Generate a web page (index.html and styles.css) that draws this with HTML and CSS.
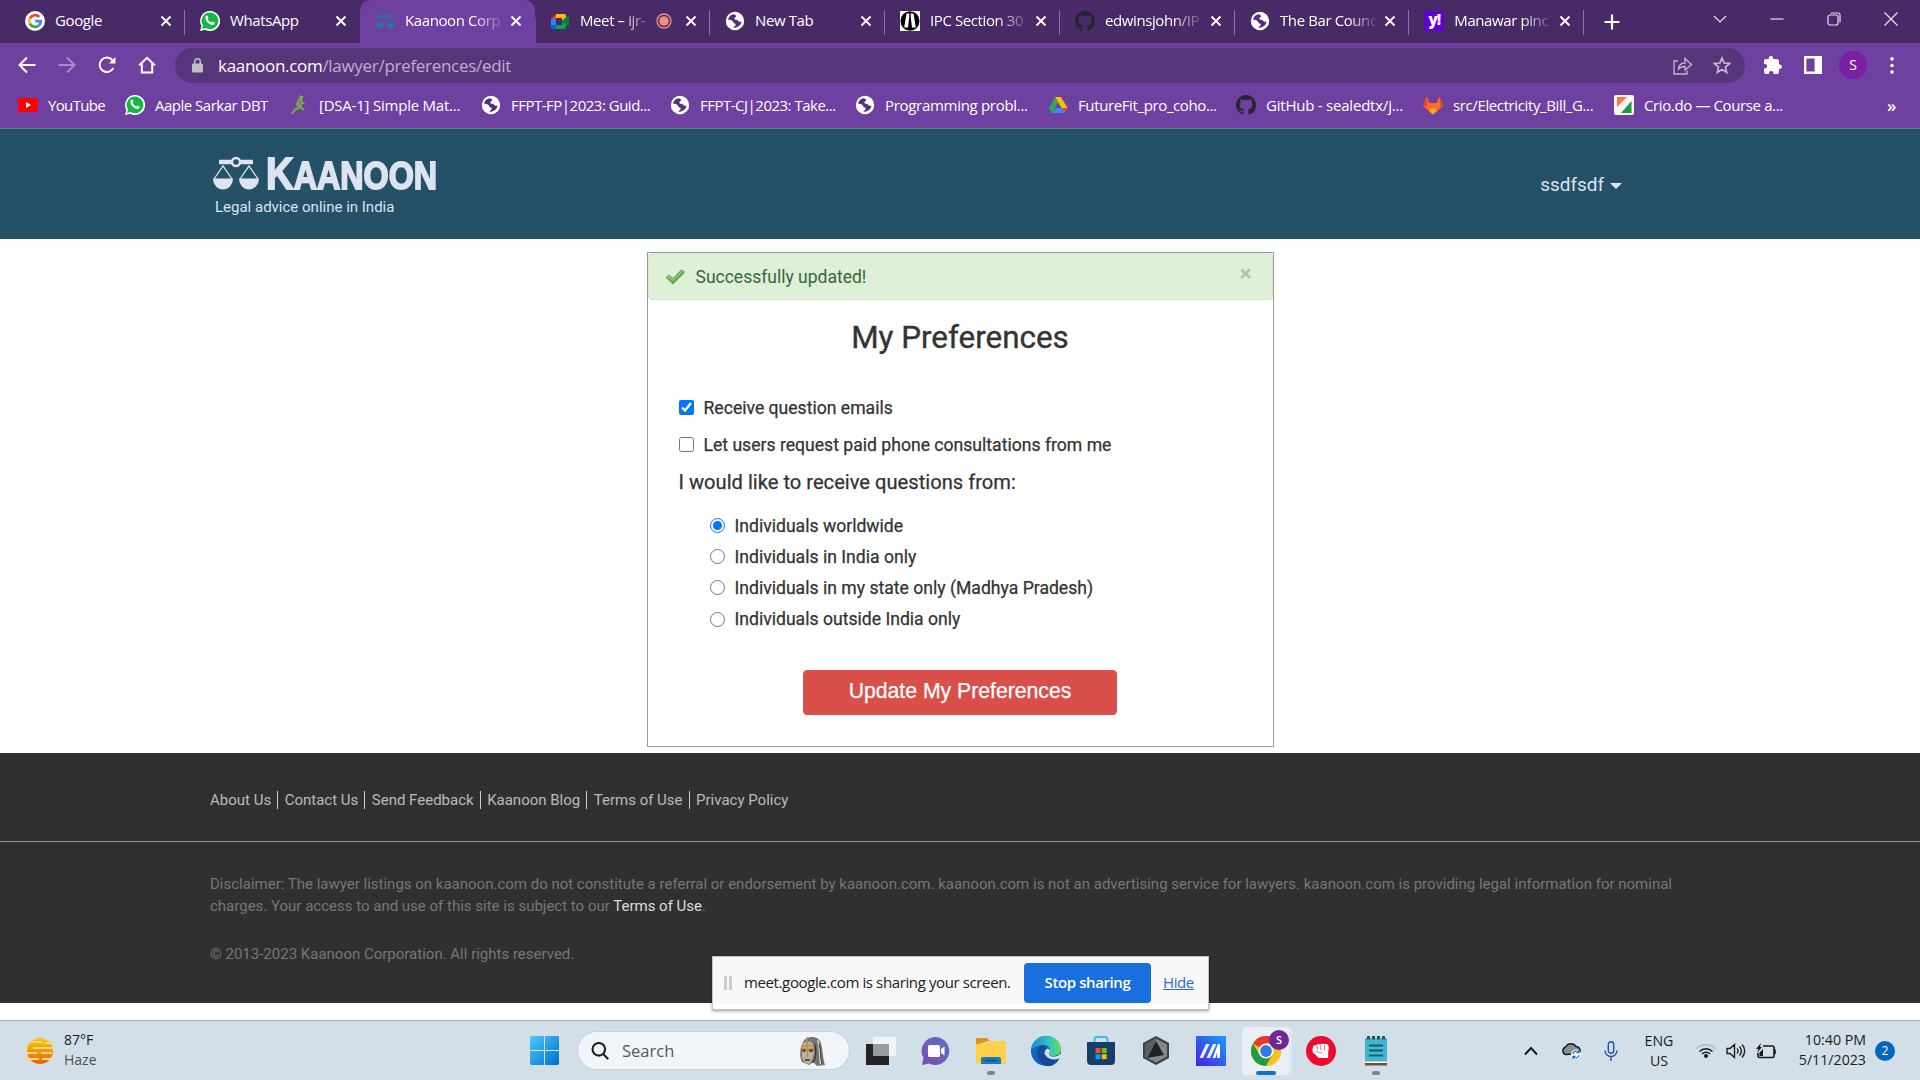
FILE: index.html
```html
<!DOCTYPE html>
<html lang="en">
<head>
<meta charset="utf-8">
<title>Kaanoon Corporation</title>
<link rel="stylesheet" href="styles.css">
</head>
<body>
<svg class="defs" aria-hidden="true">
  <symbol id="globe" viewBox="0 0 20 20"><circle cx="10" cy="10" r="9.2" fill="#fff"/><path d="M9 3.2c-3 .3-5.6 2.6-5.9 5.6 2 .1 3.600.4 4.600 1.400.9.9.4 2.200 2 2.300 1.300.1 1.200 1.500.4 2.400-.6.6-1.500.5-1.600 1.900 4 .2 7.400-2.400 8-6-1.600.2-3-.1-3.700-1.300-.6-1-2.400-.5-3.200-1.300-.8-1 .4-1.900 1.400-2.500C11.600 5.200 10.800 4 9 3.200z" fill="#53317a"/></symbol>
  <symbol id="whatsapp" viewBox="0 0 20 20"><path d="M10 0a10 10 0 0 0-8.600 15L0 20l5.200-1.300A10 10 0 1 0 10 0z" fill="#fff"/><path d="M10 1.500a8.400 8.400 0 0 0-7 13l-1 3.500 3.600-.9A8.400 8.400 0 1 0 10 1.500z" fill="#12b83f"/><path d="M6.300 4.800c.5-.5 1.200-.4 1.400.2l.7 1.600c.2.600-.7 1.200-.7 1.500.6 1.500 1.900 2.700 3.500 3.400.4.100.9-1.100 1.400-.9l1.900.9c.5.300.2 1.300-.2 1.800-1.600 1.600-4.200.6-6.200-1.200C5.800 10 4.500 7 6.300 4.800z" fill="#fff"/></symbol>
  <symbol id="github" viewBox="0 0 16 16"><path d="M8 0C3.580 0 0 3.580 0 8c0 3.540 2.290 6.530 5.470 7.590.4.070.55-.17.55-.38 0-.19-.01-.82-.01-1.490-2.010.37-2.530-.49-2.690-.94-.09-.23-.48-.94-.82-1.130-.28-.15-.68-.52-.01-.53.63-.01 1.080.58 1.230.82.72 1.210 1.870.87 2.330.66.07-.52.28-.87.51-1.070-1.780-.2-3.640-.89-3.640-3.950 0-.87.31-1.590.82-2.150-.08-.2-.36-1.020.08-2.120 0 0 .67-.21 2.200.82.64-.18 1.320-.27 2-.27s1.360.09 2 .27c1.530-1.040 2.200-.82 2.200-.82.44 1.100.16 1.920.08 2.120.51.56.82 1.270.82 2.150 0 3.070-1.870 3.750-3.650 3.950.29.25.54.73.54 1.480 0 1.070-.01 1.930-.01 2.200 0 .21.150.46.55.38A8.010 8.010 0 0 0 16 8c0-4.420-3.580-8-8-8z" fill="#23272e"/></symbol>
  <symbol id="close" viewBox="0 0 12 12"><path d="M1.500 1.500l9 9m0-9l-9 9" stroke="#fff" stroke-width="1.900"/></symbol>
  <symbol id="scales" viewBox="0 0 46 34"><g fill="none" stroke="currentColor"><path d="M6 6h13M27 6h13" stroke-width="4.600"/><circle cx="23" cy="6" r="4" stroke-width="2.400"/><path d="M1 23L10 10l9 13M27 23l9-13 9 13" stroke-width="1.300"/></g><path d="M0 22.500h20a10 11 0 0 1-20 0zM26 22.500h20a10 11 0 0 1-20 0z" fill="currentColor"/></symbol>
</svg>

<div class="tabs">
  <div class="tab">
    <svg class="fav" viewBox="0 0 20 20"><circle cx="10" cy="10" r="10" fill="#fff"/><g fill="none" stroke-width="2.700"><path d="M14.200 6A5.800 5.800 0 0 0 4.900 7.300" stroke="#ea4335"/><path d="M4.900 7.300a5.800 5.800 0 0 0 0 5.400" stroke="#fbbc05"/><path d="M4.900 12.700a5.800 5.800 0 0 0 9 1.700" stroke="#34a853"/><path d="M13.900 14.400a5.800 5.800 0 0 0 1.900-4.300H10.200" stroke="#4285f4"/></g></svg>
    <span class="name">Google</span><svg class="x"><use href="#close"/></svg>
  </div>
  <div class="tab">
    <svg class="fav"><use href="#whatsapp"/></svg>
    <span class="name">WhatsApp</span><svg class="x"><use href="#close"/></svg>
  </div>
  <div class="tab active">
    <svg class="fav teal"><use href="#scales"/></svg>
    <span class="name long">Kaanoon Corp</span><svg class="x"><use href="#close"/></svg>
  </div>
  <div class="tab">
    <svg class="fav" viewBox="0 0 20 20"><path d="M6 3h8.500a1.500 1.500 0 0 1 1.500 1.500V8l-4 2V7H6z" fill="#fbbc04"/><path d="M1 8l5-5v5z" fill="#ea4335"/><path d="M1 8h5v6H1z" fill="#2684fc"/><path d="M1 14h5v4H2.500A1.500 1.500 0 0 1 1 16.500z" fill="#0066da"/><path d="M6 14h6v-3l4 2v3.500a1.500 1.500 0 0 1-1.500 1.500H6z" fill="#00ac47"/><path d="M12 10l6-5.500c.4-.3 1-.1 1 .5v10c0 .600-.6.800-1 .5z" fill="#00832d"/></svg>
    <span class="name short">Meet – ijr-</span>
    <svg class="rec" viewBox="0 0 16 16"><circle cx="8" cy="8" r="7" fill="none" stroke="#f08b80" stroke-width="1.400"/><circle cx="8" cy="8" r="4.800" fill="#f08b80"/></svg>
    <svg class="x"><use href="#close"/></svg>
  </div>
  <div class="tab">
    <svg class="fav"><use href="#globe"/></svg>
    <span class="name">New Tab</span><svg class="x"><use href="#close"/></svg>
  </div>
  <div class="tab">
    <svg class="fav" viewBox="0 0 20 20"><path d="M0 0h20v20H0z" fill="#fff"/><ellipse cx="10" cy="10" rx="9.500" ry="9.800"/><path d="M6.500 2.500h2.800v3L8 16.500H4.200zM10.700 2.500h2.800l2.300 14H12L10.700 5.500z" fill="#fff"/></svg>
    <span class="name long">IPC Section 30</span><svg class="x"><use href="#close"/></svg>
  </div>
  <div class="tab">
    <svg class="fav"><use href="#github"/></svg>
    <span class="name long">edwinsjohn/IP</span><svg class="x"><use href="#close"/></svg>
  </div>
  <div class="tab last">
    <svg class="fav"><use href="#globe"/></svg>
    <span class="name long">The Bar Counc</span><svg class="x"><use href="#close"/></svg>
  </div>
  <div class="tab last">
    <span class="fav yahoo">y!</span>
    <span class="name long">Manawar pinc</span><svg class="x"><use href="#close"/></svg>
  </div>
  <svg class="plus" viewBox="0 0 16 16"><path d="M8 .5v15M.5 8h15" stroke="#fff" stroke-width="2.200"/></svg>
  <div class="window-controls">
    <svg viewBox="0 0 14 14"><path d="M1 4l6 6 6-6"/></svg>
    <svg viewBox="0 0 14 14"><path d="M.5 7h13"/></svg>
    <svg viewBox="0 0 14 14"><rect x="1" y="3" width="10" height="10" rx="2"/><path d="M3.500 1H11a2 2 0 0 1 2 2v7.500"/></svg>
    <svg viewBox="0 0 14 14"><path d="M.5.500l13 13m0-13l-13 13" stroke-width="1.300"/></svg>
  </div>
</div>

<div class="toolbar">
  <div class="nav">
    <svg viewBox="0 0 18 18"><path d="M17.500 9H2M9 1.500L1.500 9 9 16.500"/></svg>
    <svg viewBox="0 0 18 18" class="dim"><path d="M.5 9H16M9 1.500L16.500 9 9 16.500"/></svg>
    <svg viewBox="0 0 18 18"><path d="M15.300 12A7.200 7.200 0 1 1 14.500 4.300"/><path d="M17.500 1v6.500H11z" fill="#fff" stroke="none"/></svg>
    <svg viewBox="0 0 18 18"><path d="M1.200 9.300L9 1.800l7.800 7.500M3.800 7.500v9h10.400v-9"/></svg>
  </div>
  <div class="omnibox">
    <svg class="lock" viewBox="0 0 11 15"><rect y="5.500" width="11" height="9" rx="1.500" fill="#bdbfc4"/><path d="M2.700 6V3.600a2.800 2.800 0 0 1 5.600 0V6" fill="none" stroke="#bdbfc4" stroke-width="1.500"/></svg>
    <span class="url"><b>kaanoon.com</b>/lawyer/preferences/edit</span>
    <svg class="share" viewBox="0 0 20 18"><path d="M5 4H1v13h13v-3.500M5.500 12c.3-4 2.700-6 6.500-6V1.500L18.500 7.500 12 13V9.500c-3 0-5 .6-6.500 2.500z"/></svg>
    <svg class="star" viewBox="0 0 18 18"><path d="M9 1.500l2.200 5 5.400.5-4.100 3.600 1.200 5.300L9 13.100l-4.700 2.800 1.200-5.300L1.400 7l5.400-.5z"/></svg>
  </div>
  <svg class="puzzle" viewBox="0 0 18 18"><path d="M7 0a2.200 2.200 0 0 1 2.200 2.400V3H13a2 2 0 0 1 2 2v3.500h.6a2.300 2.300 0 0 1 0 4.600H15V16a2 2 0 0 1-2 2H9.500v-.8a2.300 2.300 0 0 0-4.600 0v.8H2a2 2 0 0 1-2-2v-3.400h.8a2.300 2.300 0 0 0 0-4.600H0V5a2 2 0 0 1 2-2h2.800v-.6A2.200 2.200 0 0 1 7 0z" fill="#fff"/></svg>
  <svg class="panel" viewBox="0 0 18 18"><path d="M0 0h18v18H0zM2.400 2.400v13.200h8.200V2.400z" fill="#fff" fill-rule="evenodd"/></svg>
  <span class="avatar">S</span>
  <svg class="dots" viewBox="0 0 4 18"><circle cx="2" cy="2" r="1.900"/><circle cx="2" cy="9" r="1.900"/><circle cx="2" cy="16" r="1.900"/></svg>
</div>

<div class="bookmarks">
  <span class="bm b1"><svg viewBox="0 0 20 20"><rect y="3" width="20" height="14" rx="2.500" fill="#f00"/><path d="M8 7l5 3-5 3z" fill="#fff"/></svg><i>YouTube</i></span>
  <span class="bm b2"><svg><use href="#whatsapp"/></svg><i>Aaple Sarkar DBT</i></span>
  <span class="bm b3"><svg viewBox="0 0 20 20"><path d="M10 1.500l3 .500-.8 4.500 1.800 1.500-3 1 1.500 4 2.500 2M11 3L8 9l2 4-4 1.500L3 19" fill="none" stroke="#7fa653" stroke-width="2.200"/></svg><i>[DSA-1] Simple Mat...</i></span>
  <span class="bm b2"><svg><use href="#globe"/></svg><i>FFPT-FP|2023: Guid...</i></span>
  <span class="bm b2"><svg><use href="#globe"/></svg><i>FFPT-CJ|2023: Take...</i></span>
  <span class="bm"><svg><use href="#globe"/></svg><i>Programming probl...</i></span>
  <span class="bm b4"><svg viewBox="0 0 20 20"><path d="M7 2h6l6.500 11h-6z" fill="#fbbc04"/><path d="M7 2l3 5.500L4 18 .8 13z" fill="#34a853"/><path d="M7.500 13h12L16 18H4z" fill="#4285f4"/><path d="M13.500 13h6L17 17z" fill="#ea4335"/></svg><i>FutureFit_pro_coho...</i></span>
  <span class="bm b3"><svg><use href="#github"/></svg><i>GitHub - sealedtx/j...</i></span>
  <span class="bm b4"><svg viewBox="0 0 20 20"><path d="M10 19.500L0 11 3.500 1l3 7h7l3-7L20 11z" fill="#fc6d26"/><path d="M3.500 1L0 11l4 .5L3.500 1l3 7h7l3-7 .5 10.500 3-.5-3.500-10-3 7h-7z" fill="#e24329"/><path d="M10 19.500L5.500 15.500 10 12.500l4.500 3z" fill="#fca326"/></svg><i>src/Electricity_Bill_G...</i></span>
  <span class="bm b4"><svg viewBox="0 0 20 20"><rect width="20" height="20" rx="2" fill="#f5f5f5"/><path d="M3 2h10L3 12z" fill="#f47b3a"/><path d="M17.500 6v12H7z" fill="#23953b"/></svg><i>Crio.do — Course a...</i></span>
  <span class="more">»</span>
</div>

<header class="site-header">
  <div class="brand">
    <div class="logo"><svg class="scales"><use href="#scales"/></svg><span class="wordmark"><b>K</b>AANOON</span></div>
    <span class="tagline">Legal advice online in India</span>
  </div>
  <div class="user"><span>ssdfsdf</span><span class="caret"></span></div>
</header>

<main class="main">
  <section class="card">
    <div class="alert">
      <svg viewBox="0 0 20 16"><path d="M.5 8.500L4 5.500l4 3.500L16 .5l3.500 1.500v2L8 15.500z" fill="#6aa84a"/><path d="M1.500 8L4 6l4 4L16.500 1.500 18.500 2.500 8 12z" fill="#8cc56c"/></svg>
      <span class="msg">Successfully updated!</span><span class="dismiss">×</span>
    </div>
    <h1>My Preferences</h1>
    <form class="prefs">
      <label class="check"><input type="checkbox" checked><span>Receive question emails</span></label>
      <label class="check"><input type="checkbox"><span>Let users request paid phone consultations from me</span></label>
      <p>I would like to receive questions from:</p>
      <div class="radios">
        <label><input type="radio" name="from" checked><span>Individuals worldwide</span></label>
        <label><input type="radio" name="from"><span>Individuals in India only</span></label>
        <label><input type="radio" name="from"><span>Individuals in my state only (Madhya Pradesh)</span></label>
        <label><input type="radio" name="from"><span>Individuals outside India only</span></label>
      </div>
      <button type="button">Update My Preferences</button>
    </form>
  </section>
</main>

<footer class="site-footer">
  <nav><a>About Us</a><a>Contact Us</a><a>Send Feedback</a><a>Kaanoon Blog</a><a>Terms of Use</a><a>Privacy Policy</a></nav>
  <div class="legal">
    <p>Disclaimer: The lawyer listings on kaanoon.com do not constitute a referral or endorsement by kaanoon.com. kaanoon.com is not an advertising service for lawyers. kaanoon.com is providing legal information for nominal<br>charges. Your access to and use of this site is subject to our <a>Terms of Use</a>.</p>
    <p class="copy">© 2013-2023 Kaanoon Corporation. All rights reserved.</p>
  </div>
</footer>

<div class="sharing">
  <span class="grip"></span>
  <span class="share-msg">meet.google.com is sharing your screen.</span>
  <span class="stop">Stop sharing</span>
  <a class="hide">Hide</a>
</div>

<div class="taskbar">
  <div class="weather">
    <svg viewBox="0 0 30 28"><defs><linearGradient id="sun" x2="0" y2="1"><stop stop-color="#fc0"/><stop offset="1" stop-color="#e2640b"/></linearGradient></defs><circle cx="15" cy="14" r="13" fill="url(#sun)"/><path d="M4 5h13M20 6h9M8 11h20M2 16h10M16 16h11M0 22h14M17 22h9" stroke="#f8d58c" stroke-width="2"/></svg>
    <div><span>87°F</span><em>Haze</em></div>
  </div>
  <svg class="start" viewBox="0 0 30 30"><defs><linearGradient id="win" x2="1" y2="1"><stop stop-color="#4cc9fa"/><stop offset="1" stop-color="#0070ce"/></linearGradient></defs><path d="M0 1.500A1.500 1.500 0 0 1 1.500 0h13v14.500H0zM15.500 0h13A1.500 1.500 0 0 1 30 1.500v13H15.500zM0 15.500h14.500V30h-13A1.500 1.500 0 0 1 0 28.500zM15.500 15.500H30v13a1.500 1.500 0 0 1-1.500 1.500h-13z" fill="url(#win)"/></svg>
  <div class="search">
    <svg class="mag" viewBox="0 0 18 18"><circle cx="7.800" cy="7.300" r="6.300"/><path d="M12.300 12l5 5.200"/></svg>
    <span>Search</span>
    <svg class="mask" viewBox="0 0 26 30"><path d="M4 6C7 0 18-1 21 5c3 6 2 15 5 24l-8 1-4-4-4 3-7-3C0 20 1 11 4 6z" fill="#75756f"/><path d="M2.500 10C5 4 12 4 14.500 9c1.500 6 0 15-4.500 19-4 0-7-4-7-8z" fill="#b9b499"/><path d="M2 13.500h5M9.500 13.500h5.500" stroke="#be3f2b" stroke-width="1.500"/><path d="M8.300 1v20M2 11c3-2 10-2 14 0" stroke="#b98f40" stroke-width="1.400" fill="none"/><path d="M3.500 15h3M10 15h4M6 24h5M15.500 8c2 6 2 14-2 19" stroke="#3a332c" stroke-width="1.300" fill="none"/><path d="M18.500 4c2.500 6 2 15 3 24" stroke="#d6d6d4" stroke-width="1.500" fill="none"/><path d="M20 8c2 6 1 13 3 20" stroke="#454540" stroke-width="1" fill="none"/></svg>
  </div>
  <div class="apps">
    <span><svg viewBox="0 0 30 30"><path d="M0 8h23v21H0z" fill="#242424"/><path d="M7 1h23v19H7z" fill="#fff" fill-opacity=".65"/><path d="M7 8h16v12H7z" fill="#9a9b9c"/></svg></span>
    <span><svg viewBox="0 0 30 30"><defs><linearGradient id="chat" x1="1" x2="0" y2="1"><stop stop-color="#4f74c8"/><stop offset=".5" stop-color="#6b62b8"/><stop offset="1" stop-color="#7a48b0"/></linearGradient></defs><path d="M15 1a14 14 0 1 1-7 26.500L1 29l1.500-7A14 14 0 0 1 15 1z" fill="url(#chat)"/><rect x="7" y="9" width="12" height="12" rx="1.500" fill="#fff"/><path d="M20 13l3.500-2.500v9L20 17z" fill="#fff"/></svg></span>
    <span class="run"><svg viewBox="0 0 30 30"><path d="M0 3a1 1 0 0 1 1-1h10l3 3h-2L0 9z" fill="#dc970f"/><path d="M0 8l10-.5L13 5h17v23H0z" fill="#ffd04a"/><path d="M5 28v-5a2 2 0 0 1 2-2h16a2 2 0 0 1 2 2v5z" fill="#1878c0"/><path d="M9 24.500h12" stroke="#0f4f86" stroke-width="1.600"/></svg></span>
    <span><svg viewBox="0 0 30 30"><defs><linearGradient id="ed1"><stop stop-color="#1c8fd8"/><stop offset=".6" stop-color="#2fc4c4"/><stop offset="1" stop-color="#68df4e"/></linearGradient></defs><circle cx="15" cy="15" r="15" fill="#0d64b8"/><path d="M0 14C1 5 8 0 15 0c9 0 15 6 15 13 0 5-4 7-8 7-3 0-4-1-4-2 0-2 1-2 1-4 0-3-3-5-7-5C7 9 2 12 0 14z" fill="url(#ed1)"/><path d="M12 9c-4 1-7 6-5 12 1 4 5 8 9 9h4c5-2 7-5 9-8-7 3-13 1-15-4-1-3 0-5 1-6z" fill="#174a96"/><path d="M19 14c0 2-1 2-1 4s3 3 6 2.500c2-.3 4-1 5.500-3L30 20l-1.500 2.500c-5 2-12 1-14.500-4-1.200-2.500.5-5 2.500-6z" fill="#d3e0e9"/></svg></span>
    <span><svg viewBox="0 0 30 30"><path d="M8.500 6V3.500A2.500 2.500 0 0 1 11 1h8a2.500 2.500 0 0 1 2.500 2.500V6" fill="none" stroke="#35bdf1" stroke-width="2"/><path d="M1 6h28v19a4 4 0 0 1-4 4H5a4 4 0 0 1-4-4z" fill="#173e68"/><path d="M9.500 12h5v5h-5z" fill="#f25022"/><path d="M15.700 12h5v5h-5z" fill="#7fba00"/><path d="M9.500 18.200h5v5h-5z" fill="#00a4ef"/><path d="M15.700 18.200h5v5h-5z" fill="#ffb900"/></svg></span>
    <span><svg viewBox="0 0 30 30"><path d="M15 0l13 7v15l-13 7L2 22V7z" fill="#3f4144"/><path d="M15 2.500l11 6v12l-11 6-11-6v-12z" fill="#85898c"/><path d="M15 5l8 14-17 3z" fill="#202224"/><path d="M15 2.500V5L6 22l-2-2V8.500z" fill="#5b5e61"/></svg></span>
    <span><svg viewBox="0 0 30 30"><defs><linearGradient id="asus" x1="1" x2="0" y2="1"><stop stop-color="#12a0fa"/><stop offset="1" stop-color="#4b1fe0"/></linearGradient></defs><path d="M0 0h30v30H0z" fill="url(#asus)"/><path d="M3.500 22h3.500l6.500-14H10zM10.500 22H14l6.500-14H17z" fill="#fff" fill-opacity=".9"/><path d="M16.500 22L22 8h2v14h-3v-5.500l-1.500 5.500z" fill="#fff"/></svg></span>
    <span class="current"><svg viewBox="0 0 30 30"><circle cx="15" cy="15" r="15" fill="#fbc116"/><path d="M15 15L2 7.500A15 15 0 0 1 28 7.500H15z" fill="#e33b2e"/><path d="M2 7.500A15 15 0 0 0 15 30l6.500-11.300L15 15 8.500 18.700z" fill="#249a45"/><path d="M15 7.500h13A15 15 0 0 1 15 30l6.500-11.300z" fill="#fbc116"/><circle cx="15" cy="15" r="7.500" fill="#fff"/><circle cx="15" cy="15" r="5.900" fill="#3579e8"/></svg><b>S</b></span>
    <span><svg viewBox="0 0 30 30"><circle cx="15" cy="15" r="15" fill="#ee0a2e"/><path d="M6.500 13l1-3.500 3-.5 1-1 3 .2.800-.5 3 .3.700-.3 3 .8.800 3-.6 5v5.500h-9.500l-3.500-3.500-2.500-2z" fill="#fff"/><path d="M11 9.500l.3 4.500M14.800 9v5M18.600 9l-.2 5.500M10 15.500l6 1.500" stroke="#ee0a2e" stroke-width=".6"/></svg></span>
    <span class="run"><svg viewBox="0 0 30 30"><path d="M4 2h22v24H4z" fill="#45b4ce"/><path d="M4 25.500h22v1.500H4z" fill="#fff"/><path d="M4 27h22v2.500H4z" fill="#7b4a1d"/><path d="M8 9.500h14M8 14.500h14M8 19.500h14" stroke="#155a72" stroke-width="1.800"/><path d="M7.500 0v4M12.500 0v4M17.500 0v4M22.500 0v4" stroke="#1d5468" stroke-width="3" stroke-dasharray="3.500 1"/></svg></span>
  </div>
  <div class="tray">
    <svg class="t-up" viewBox="0 0 14 10"><path d="M1 8.500l6-6.500 6 6.500" stroke-width="1.900"/></svg>
    <svg class="t-cloud" viewBox="0 0 20 18"><path d="M4.500 12.500a4 4 0 0 1 0-7.500 6 6 0 0 1 10.500-.5 4.200 4.200 0 0 1 3 7z" fill="#8c8f92" stroke-width="1.500"/><circle cx="15" cy="12.500" r="5" fill="#fff" stroke="none"/><path d="M11.800 11.800a3.300 3.300 0 0 1 6-1.300m.4 2.700a3.300 3.300 0 0 1-6 1.300M18 8v2.700h-2.500M12 17v-2.700h2.500" stroke="#1268bd" stroke-width="1.200"/></svg>
    <svg class="t-mic" viewBox="0 0 14 20"><rect x="4.300" y=".8" width="5.400" height="11.500" rx="2.700"/><path d="M1 9.500a6 6 0 0 0 12 0M7 15.500V20"/></svg>
    <div class="lang"><span>ENG</span><span>US</span></div>
    <svg class="t-wifi" viewBox="0 0 20 16"><path d="M1 5.500a12.500 12.500 0 0 1 18 0" stroke="#a9b1b8"/><path d="M3.500 8.500a9 9 0 0 1 13 0M6 11a5.600 5.600 0 0 1 8 0"/><circle cx="10" cy="13" r="2" fill="#1b1b1b" stroke="none"/></svg>
    <svg class="t-vol" viewBox="0 0 20 18"><path d="M1 6.500h3l4.500-4v13l-4.500-4H1zM11 6.500c1.500 1.500 1.500 3.500 0 5M13.500 4.500c2.500 2.500 2.500 6.500 0 9M16 2.500c3.500 3.500 3.500 9.500 0 13"/></svg>
    <svg class="t-bat" viewBox="0 0 20 16"><path d="M7 3h9.500A1.500 1.500 0 0 1 18 4.500v8.500a1.500 1.500 0 0 1-1.500 1.500h-13A1.500 1.500 0 0 1 2 13v-3M19 6.500v4.500" stroke-width="1.700"/><path d="M5 0L0 6h2.500L1 10l5-6H4z" fill="#1b1b1b" stroke="none"/><path d="M3.500 13V9.500L7 6v7z" fill="#1b1b1b" stroke="none"/></svg>
    <div class="clock"><span>10:40 PM</span><span>5/11/2023</span></div>
    <span class="count">2</span>
  </div>
</div>
</body>
</html>
```
FILE: styles.css
```css
* { box-sizing: border-box; }
body {
  margin: 0;
  width: 1920px;
  height: 1080px;
  overflow: hidden;
  display: flex;
  flex-direction: column;
  background: #fff;
  font-family: Roboto, "Liberation Sans", sans-serif;
  color: #333;
}
svg { display: block; flex: none; }
.defs { position: absolute; width: 0; height: 0; }

/* Browser tabs */
.tabs, .toolbar, .bookmarks, .sharing, .taskbar {
  font-family: "Open Sans", "Noto Sans", sans-serif;
  color: #fff;
}
.tabs { height: 43px; flex: none; display: flex; align-items: stretch; background: #472a66; padding-left: 10px; font-size: 15px; }
.tab { width: 175px; display: flex; align-items: center; padding: 0 13px 2px 15px; background: linear-gradient(#8a72a3, #8a72a3) right 10px / 1px 25px no-repeat; }
.tab.last { width: 174.3px; }
.tab:has(+ .active) { background: none; }
.tab.active { background: #6e409f; border-radius: 10px 10px 0 0; box-shadow: 1px 10px 0 #6e409f; clip-path: inset(0 -1px 0 0); }
.tab .fav { width: 20px; height: 20px; margin-right: 10px; flex: none; }
.teal { color: #217c9c; }
.name { flex: none; width: 100px; margin-top: -1px; white-space: nowrap; letter-spacing: -.4px; }
.name.long { mask-image: linear-gradient(90deg, #000 68px, transparent 100px); }
.name.short { width: 74px; mask-image: linear-gradient(90deg, #000 42px, transparent 74px); }
.rec { width: 16px; height: 16px; margin: 0 0 0 2px; }
.tab .x { width: 12px; height: 12px; margin-left: auto; }
.yahoo { background: #5f01d1; font-weight: 800; font-size: 15px; line-height: 17px; text-align: center; letter-spacing: -1px; }
.plus { width: 16px; height: 16px; align-self: center; margin-left: 20px; }
.window-controls { flex: 1; display: flex; align-items: center; justify-content: flex-end; gap: 43px; padding: 0 22px 5px 0; }
.window-controls svg { width: 14px; height: 14px; fill: none; stroke: #e8e2ee; stroke-width: 1.2; }

/* Address bar */
.toolbar { height: 44px; flex: none; display: flex; align-items: center; background: #6e409f; padding-left: 18px; }
.nav { display: flex; gap: 22px; width: 157px; }
.nav svg { width: 18px; height: 18px; fill: none; stroke: #fff; stroke-width: 2; }
.nav .dim { stroke: #a88bc7; }
.omnibox { width: 1570px; height: 35px; border-radius: 18px; background: #56367b; display: flex; align-items: center; padding: 0 14px 0 17px; margin-top: 1px; }
.lock { width: 11px; height: 15px; margin-right: 15px; }
.url { font-size: 17px; color: #bfaed0; letter-spacing: -.3px; margin-top: -1px; }
.url b { font-weight: 400; color: #fff; }
.share, .star { fill: none; stroke: #c5b8d2; stroke-width: 1.3; }
.share { width: 20px; height: 18px; margin-left: auto; }
.star { width: 18px; height: 19px; margin-left: 20px; stroke-width: 1.7; }
.puzzle { width: 18px; height: 18px; margin-left: 19px; }
.panel { width: 18px; height: 18px; margin-left: 22px; }
.avatar { width: 28px; height: 28px; border-radius: 50%; background: #7b1fa2; font-size: 14px; line-height: 27px; text-align: center; margin-left: 17px; }
.dots { width: 4px; height: 17px; margin-left: 23px; fill: #fff; }

/* Bookmarks */
.bookmarks {
  height: 42px; flex: none; display: grid; align-items: center;
  grid-template-columns: 107px 164px 192px 189px 185px 193px 188px 187px 191px 273px auto;
  padding: 0 0 5px 18px; background: #6e409f; border-bottom: 1px solid #5d7f9f; font-size: 15px;
}
.bm { display: flex; align-items: center; gap: 10px; white-space: nowrap; letter-spacing: -.3px; }
.bm svg { width: 20px; height: 20px; }
.bm i { font-style: normal; }
.b1 { letter-spacing: -.65px; }
.b2 { letter-spacing: -.5px; }
.b3 { letter-spacing: -.22px; }
.b4 { letter-spacing: -.38px; }
.more { font-size: 17px; font-weight: 600; }

/* Site header */
.site-header { height: 110px; flex: none; display: flex; justify-content: space-between; padding: 27px 298px 0 213px; background: #245166; color: #dfe2ef; }
.brand { display: flex; flex-direction: column; }
.logo { display: flex; height: 36px; gap: 7px; }
.scales { width: 46px; height: 34px; }
.wordmark { font: 700 38px/36px "Liberation Sans", sans-serif; -webkit-text-stroke: 1.8px currentColor; transform-origin: 0 0; transform: scaleX(.85); height: 36px; }
.wordmark b { font-size: 45px; }
.tagline { font-size: 15px; line-height: 18px; margin: 6px 0 0 2px; }
.user { display: flex; align-items: center; gap: 6px; height: 57px; font-size: 18.9px; }
.caret { border: 6.5px solid transparent; border-top-color: currentColor; border-bottom: 0; margin-top: 3px; }

/* Preferences card */
.main { height: 514px; flex: none; padding-top: 13px; display: flex; justify-content: center; }
.card { width: 627px; height: 495px; border: 1px solid #999; }
.alert { height: 47px; display: flex; align-items: center; padding: 0 20px 0 16px; background: #dff0d8; border: 1px solid #d6e9c6; border-radius: 4px; color: #36683a; font-size: 17.5px; }
.alert svg { width: 20px; height: 16px; margin-right: 11px; }
.dismiss { margin: -6px 0 0 auto; font-weight: 700; font-size: 22px; color: #b2c1ad; }
h1 { margin: 17px 0 0; font-size: 31.4px; line-height: 42px; font-weight: 400; text-align: center; -webkit-text-stroke: .35px currentColor; }
.prefs { padding: 30px 31px 0; font-size: 17.6px; color: #333; -webkit-text-stroke: .25px currentColor; }
.prefs label { display: flex; align-items: center; }
.prefs input { width: 15px; height: 15px; margin: 0 10px 0 0; }
.check { height: 37px; }
.prefs p { margin: 0; font-size: 20.15px; line-height: 39px; }
.radios { padding: 8px 0 0 31px; }
.radios label { height: 31.2px; }
.prefs button { display: block; width: 314px; height: 45px; margin: 35px auto 0; padding: 0 0 2px; border: 1px solid #d9534f; border-radius: 4px; background: #d9504a; color: #fff; font: 21.2px "Liberation Sans", sans-serif; }

/* Footer */
.site-footer { height: 250px; flex: none; background: #303030; color: #777; font-size: 15px; }
.site-footer a { color: #bbb; }
.site-footer nav { height: 89px; display: flex; align-items: center; padding: 5px 0 0 210px; border-bottom: 1px solid #999; }
.site-footer nav a { line-height: 18px; padding: 0 6px 0 6.5px; border-right: 1px solid #ccc; }
.site-footer nav a:first-child { padding-left: 0; }
.site-footer nav a:last-child { border: 0; }
.legal { padding: 31px 0 0 210px; line-height: 22px; white-space: nowrap; }
.legal p { margin: 0; }
.legal .copy { margin-top: 26px; }
.legal a { color: #ddd; }

/* Screen sharing notice */
.sharing { position: absolute; left: 712px; top: 956px; width: 497px; height: 54px; display: flex; align-items: center; background: linear-gradient(#f7f7f7 47px, #fff 47px); border: 1px solid #c4c4c4; box-shadow: 0 1px 3px rgba(0, 0, 0, .4); padding-left: 11px; font-size: 15px; color: #222; white-space: nowrap; }
.grip { width: 8px; height: 14px; border: solid #ccc; border-width: 0 3px; margin-right: 12px; }
.share-msg { width: 280px; letter-spacing: -.38px; padding-bottom: 2px; }
.stop { width: 127px; height: 40px; border-radius: 4px; background: #1a6fdf; color: #fff; font-weight: 600; line-height: 38px; text-align: center; letter-spacing: -.4px; }
.hide { margin-left: 12px; padding-bottom: 2px; letter-spacing: -.4px; color: #2f6bd0; text-decoration: underline; }

/* Taskbar */
.taskbar { height: 60px; flex: none; margin-top: 17px; display: flex; align-items: center; background: #d3dfe8; border-top: 1px solid #a9b1b7; color: #1b1b1b; font-size: 14px; padding-left: 25px; }
.weather { width: 505px; display: flex; align-items: center; gap: 9px; line-height: 20px; }
.weather div { padding-bottom: 2px; }
.weather svg { width: 30px; height: 28px; }
.weather span, .weather em { display: block; font-style: normal; }
.weather em { color: #4c5055; }
.start { width: 29px; height: 29px; }
.search { width: 273px; height: 39px; margin-left: 18px; border: 1px solid #c6cfd6; border-radius: 20px; background: #f1f5f9; display: flex; align-items: center; padding: 0 24px 0 13px; font-size: 16.5px; color: #54585d; }
.mag { width: 18px; height: 18px; margin-right: 13px; fill: none; stroke: #1f1f1f; stroke-width: 2.1; }
.mask { width: 26px; height: 30px; margin-left: auto; }
.apps { display: flex; gap: 8px; margin-left: 7px; }
.apps > span { width: 47px; height: 48px; position: relative; display: flex; align-items: center; justify-content: center; }
.apps svg { width: 30px; height: 30px; }
.apps .current { background: #e9eff4; border-radius: 4px; box-shadow: 3px 0 0 #dde6ed; }
.apps b { position: absolute; right: 0; top: 3px; width: 20px; height: 20px; border-radius: 50%; background: #6d2a96; color: #fff; font: 600 11px/20px "Open Sans", sans-serif; text-align: center; }
.run::after, .current::after { content: ""; position: absolute; bottom: 0; left: 20px; width: 8px; height: 4px; border-radius: 2px; background: #7c848b; }
.current::after { left: 14px; width: 20px; background: #0a74cc; }
.tray { flex: 1; display: flex; align-items: center; padding-left: 125px; font-size: 14.2px; }
.tray svg { fill: none; stroke: #1b1b1b; stroke-width: 1.4; }
.t-up { width: 14px; height: 10px; }
.t-cloud { width: 20px; height: 18px; margin-left: 23px; }
.tray .t-mic { width: 14px; height: 20px; margin-left: 23px; stroke: #2453a5; }
.lang { width: 40px; margin-left: 21px; text-align: center; line-height: 20px; }
.lang span, .clock span { display: block; }
.t-wifi { width: 20px; height: 16px; margin-left: 17px; }
.t-vol { width: 20px; height: 18px; margin-left: 10px; }
.t-bat { width: 20px; height: 16px; margin-left: 10px; }
.clock { width: 90px; padding-bottom: 2px; text-align: right; line-height: 20px; }
.count { width: 20px; height: 20px; margin-left: 9px; border-radius: 50%; background: #0067c0; color: #fff; font-size: 12px; line-height: 20px; text-align: center; }
```
